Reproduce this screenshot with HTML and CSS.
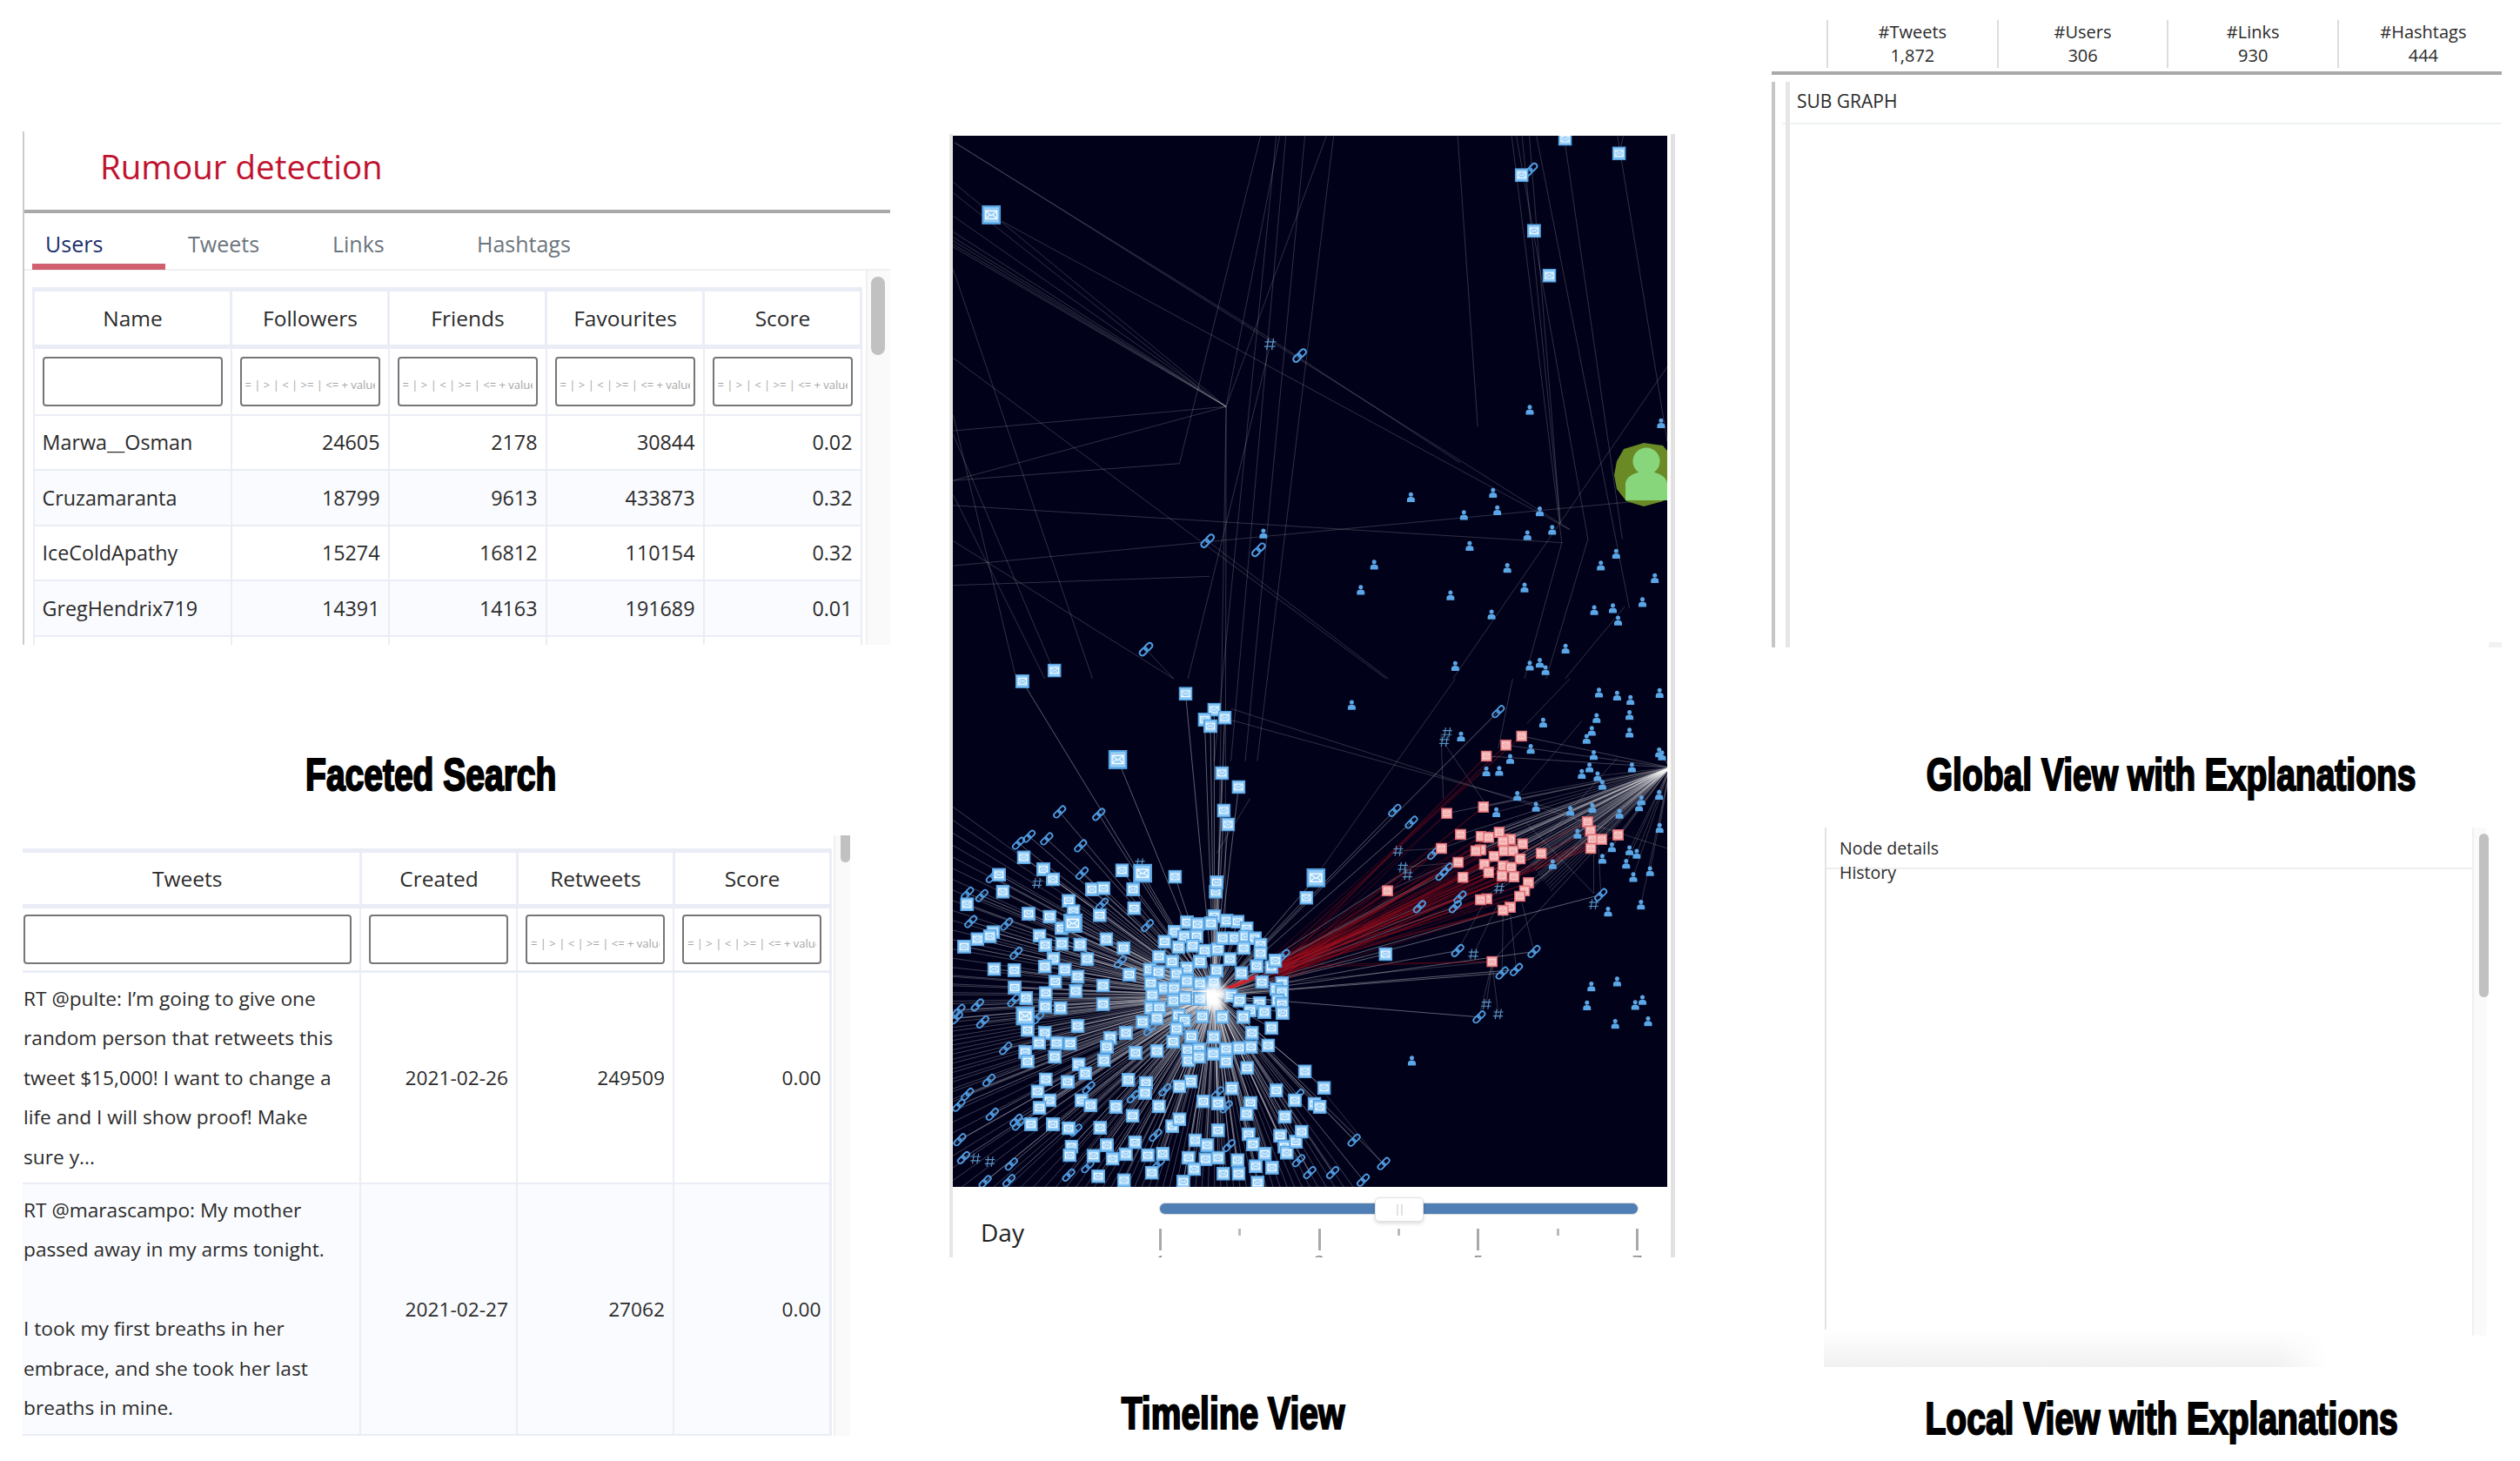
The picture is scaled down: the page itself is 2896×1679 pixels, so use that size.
FILE: index.html
```html
<!DOCTYPE html>
<html lang="en">
<head>
    <meta charset="UTF-8">
    <title>Rumour detection</title>
    <link rel="stylesheet" href="styles.css">
</head>
<body>
<div class="page">

    <div class="col col-left">
        <div class="users-panel">
            <h1 class="title">Rumour detection</h1>
            <div class="tabs">
                <span class="tab tab-users active">Users</span>
                <span class="tab tab-tweets">Tweets</span>
                <span class="tab tab-links">Links</span>
                <span class="tab tab-hashtags">Hashtags</span>
            </div>
            <div class="table-scroll">
                <div class="table-wrap">
                    <table class="grid users-grid">
                        <colgroup><col class="u-name"><col class="u-num"><col class="u-num"><col class="u-num"><col class="u-num"></colgroup>
                        <tr class="head-row"><th>Name</th><th>Followers</th><th>Friends</th><th>Favourites</th><th>Score</th></tr>
                        <tr class="filter-row">
                            <td><input></td>
                            <td><input placeholder="= | > | < | >= | <= + value"></td>
                            <td><input placeholder="= | > | < | >= | <= + value"></td>
                            <td><input placeholder="= | > | < | >= | <= + value"></td>
                            <td><input placeholder="= | > | < | >= | <= + value"></td>
                        </tr>
                        <tr class="row"><td>Marwa__Osman</td><td class="num">24605</td><td class="num">2178</td><td class="num">30844</td><td class="num">0.02</td></tr>
                        <tr class="row odd"><td>Cruzamaranta</td><td class="num">18799</td><td class="num">9613</td><td class="num">433873</td><td class="num">0.32</td></tr>
                        <tr class="row"><td>IceColdApathy</td><td class="num">15274</td><td class="num">16812</td><td class="num">110154</td><td class="num">0.32</td></tr>
                        <tr class="row odd"><td>GregHendrix719</td><td class="num">14391</td><td class="num">14163</td><td class="num">191689</td><td class="num">0.01</td></tr>
                        <tr class="row"><td></td><td></td><td></td><td></td><td></td></tr>
                    </table>
                </div>
                <div class="track track-users"><div class="thumb thumb-users"></div></div>
            </div>
        </div>

        <div class="caption caption-faceted"><span>Faceted Search</span></div>

        <div class="tweets-panel">
            <div class="tweets-wrap">
                <table class="grid tweets-grid">
                    <colgroup><col class="t-text"><col class="t-num"><col class="t-num"><col class="t-num"></colgroup>
                    <tr class="head-row"><th>Tweets</th><th>Created</th><th>Retweets</th><th>Score</th></tr>
                    <tr class="filter-row">
                        <td><input></td>
                        <td><input></td>
                        <td><input placeholder="= | > | < | >= | <= + value"></td>
                        <td><input placeholder="= | > | < | >= | <= + value"></td>
                    </tr>
                    <tr class="tweet-row">
                        <td>RT @pulte: I’m going to give one random person that retweets this tweet $15,000! I want to change a life and I will show proof! Make sure y...</td>
                        <td class="num">2021-02-26</td><td class="num">249509</td><td class="num">0.00</td>
                    </tr>
                    <tr class="tweet-row odd">
                        <td>RT @marascampo: My mother passed away in my arms tonight.<br><br>I took my first breaths in her embrace, and she took her last breaths in mine.</td>
                        <td class="num">2021-02-27</td><td class="num">27062</td><td class="num">0.00</td>
                    </tr>
                </table>
            </div>
            <div class="track track-tweets"><div class="thumb thumb-tweets"></div></div>
        </div>
    </div>

    <div class="col col-mid">
        <div class="graph-panel">
            <svg id="graph" class="graph" width="821" height="1208" viewBox="0 0 821 1208">
                <defs>
                    <radialGradient id="glow">
                        <stop offset="0" stop-color="#fff"></stop>
                        <stop offset="0.45" stop-color="#fff" stop-opacity="0.75"></stop>
                        <stop offset="1" stop-color="#fff" stop-opacity="0"></stop>
                    </radialGradient>
                    <symbol id="tweet" viewBox="0 0 24 24">
                        <rect width="24" height="24" fill="#55a2e2"></rect>
                        <rect x="2.5" y="2.5" width="19" height="19" fill="#93cdf7"></rect>
                        <rect x="5" y="7" width="14" height="10" fill="none" stroke="#fff" stroke-width="1.4"></rect>
                        <path d="M5 7l7 6 7-6M5 17l5-5M19 17l-5-5" fill="none" stroke="#fff" stroke-width="1.2"></path>
                    </symbol>
                    <symbol id="tweet-red" viewBox="0 0 24 24">
                        <rect width="24" height="24" fill="#d9656f"></rect>
                        <rect x="2.5" y="2.5" width="19" height="19" fill="#f2a9a9"></rect>
                        <rect x="5" y="7" width="14" height="10" fill="none" stroke="#fbe3e3" stroke-width="1.2"></rect>
                        <path d="M5 7l7 6 7-6" fill="none" stroke="#fbe3e3" stroke-width="1"></path>
                    </symbol>
                    <symbol id="user" viewBox="0 0 20 24">
                        <circle cx="10" cy="6.5" r="5" fill="#5ba6e6"></circle>
                        <path d="M1 24v-6c0-4 4-6 9-6s9 2 9 6v6z" fill="#5ba6e6"></path>
                    </symbol>
                    <symbol id="link" viewBox="0 0 24 24">
                        <g transform="rotate(-45 12 12)" fill="none" stroke="#4f9be0" stroke-width="2.6">
                            <rect x="0.5" y="8" width="13" height="8" rx="4"></rect>
                            <rect x="10.5" y="8" width="13" height="8" rx="4"></rect>
                        </g>
                    </symbol>
                    <symbol id="hash" viewBox="0 0 24 24">
                        <path d="M9 2L6 22M18 2l-3 20M3 8h19M2 16h19" fill="none" stroke="#5a93c4" stroke-width="2"></path>
                    </symbol>
                </defs>
                <g id="edges"></g>
                <g id="nodes"></g>
                <g class="focus-node">
                    <path d="M794 353l22 3 10 12v44l-10 8-22 6-20-6-11-14-3-16 3-16 8-14z" fill="#6a8a26"></path>
                    <circle cx="797" cy="374" r="15.5" fill="#88d67c"></circle>
                    <path d="M773 419v-18c0-9 10-15 24-15s24 6 24 15v18z" fill="#88d67c"></path>
                </g>
            </svg>
            <div class="day-bar">
                <span class="day-label">Day</span>
                <div class="slider">
                    <div class="slider-track">
                        <div class="slider-handle"><i></i><i></i></div>
                    </div>
                    <div class="ticks">
                        <div class="tick big"><b></b><span>1</span></div>
                        <div class="tick"><b></b></div>
                        <div class="tick big"><b></b><span>3</span></div>
                        <div class="tick"><b></b></div>
                        <div class="tick big"><b></b><span>5</span></div>
                        <div class="tick"><b></b></div>
                        <div class="tick big"><b></b><span>7</span></div>
                    </div>
                </div>
            </div>
        </div>
        <div class="caption caption-timeline"><span>Timeline View</span></div>
    </div>

    <div class="col col-right">
        <div class="stats">
            <div class="stat">#Tweets<br>1,872</div>
            <div class="stat">#Users<br>306</div>
            <div class="stat">#Links<br>930</div>
            <div class="stat">#Hashtags<br>444</div>
        </div>
        <div class="sub-graph">
            <div class="sub-graph-title">SUB GRAPH</div>
            <div class="corner-mark"></div>
        </div>
        <div class="caption caption-global"><span>Global View with Explanations</span></div>
        <div class="local-panel">
            <div class="local-main">
                <div class="local-head">Node details</div>
                <div class="local-sub">History</div>
            </div>
            <div class="track track-local"><div class="thumb thumb-local"></div></div>
        </div>
        <div class="local-fade"></div>
        <div class="caption caption-local"><span>Local View with Explanations</span></div>
    </div>

</div>
<script src="graph.js"></script>
</body>
</html>
```

FILE: styles.css
```css
* {
    box-sizing: border-box;
}
body {
    margin: 0;
    background: #fff;
    font-family: "Open Sans", sans-serif;
    color: #2b2b2b;
}
.page {
    display: grid;
    grid-template-columns: 1060px 976px 860px;
    width: 2896px;
    height: 1679px;
    overflow: hidden;
}
.col {
    min-width: 0;
}

/* captions */
.caption {
    height: 50px;
    line-height: 50px;
    text-align: center;
    white-space: nowrap;
}
.caption span {
    display: inline-block;
    font-family: "Liberation Sans", sans-serif;
    font-weight: 700;
    font-size: 52px;
    color: #000;
    -webkit-text-stroke: 2.2px #000;
    transform: scaleX(0.75);
}
.caption-faceted {
    width: 938px;
    margin-top: 124px;
}
.caption-timeline {
    width: 652px;
    margin-top: 154px;
}
.caption-global {
    width: 918px;
    margin-top: 121px;
}
.caption-local {
    width: 896px;
    margin-top: 34px;
}

/* left column */
.col-left {
    padding: 151px 0 0 26px;
}
.users-panel {
    width: 997px;
    height: 590px;
    overflow: hidden;
    border-left: 2px solid #ccc;
}
.title {
    margin: 0;
    height: 94px;
    padding: 13px 0 0 87px;
    font-size: 38.5px;
    line-height: 54px;
    font-weight: 400;
    color: #c0132f;
    border-bottom: 4px solid #a9a9a9;
}
.tabs {
    display: flex;
    height: 66px;
    border-bottom: 2px solid #eef0f4;
    font-size: 25px;
    color: #6c757d;
}
.tab {
    height: 65px;
    padding-top: 7px;
    line-height: 56px;
}
.tab-users {
    width: 153px;
    margin-left: 9px;
    padding-left: 15px;
    color: #1d2f6b;
    border-bottom: 7px solid #d0606e;
}
.tab-tweets {
    width: 166px;
    margin-left: 26px;
}
.tab-links {
    width: 166px;
}
.table-scroll {
    display: flex;
    height: 430px;
}
.table-wrap {
    width: 967px;
    padding: 19px 0 0 9px;
}
.track {
    border-left: 2px solid #eef0f4;
    background: #fafafa;
}
.track-users {
    width: 28px;
    padding: 7px 0 0 4px;
}
.thumb {
    background: #c1c1c1;
    border-radius: 8px;
}
.thumb-users {
    width: 16px;
    height: 90px;
}

.grid {
    border-collapse: collapse;
    table-layout: fixed;
    font-size: 23.3px;
    color: #2b2b2b;
}
.grid th {
    font-weight: 400;
    font-size: 24.5px;
    text-align: center;
    background: #fff;
    padding: 0 9px 0 10px;
    border: 3px solid #eaedf5;
    border-top-width: 5px;
    border-bottom-width: 5px;
}
.grid td {
    padding: 0 9px;
    border: 2px solid #eaedf5;
    overflow: hidden;
}
.grid .num {
    text-align: right;
}
.grid input {
    display: block;
    width: 100%;
    height: 57px;
    padding: 8px 4px 0;
    border: 2px solid #767676;
    border-radius: 4px;
    background: #fff;
    font-family: "Open Sans", sans-serif;
    font-size: 13px;
}
.grid input::placeholder {
    color: #a5a5a5;
    opacity: 1;
}
.users-grid {
    width: 951px;
}
.u-name {
    width: 227px;
}
.u-num {
    width: 181px;
}
.users-grid .head-row {
    height: 66px;
}
.users-grid .filter-row {
    height: 78px;
}
.users-grid .row {
    height: 63.5px;
}
.odd td {
    background: #fafbfe;
}

/* tweets table */
.tweets-panel {
    display: flex;
    width: 951px;
    height: 690px;
    margin-top: 45px;
    overflow: hidden;
}
.tweets-wrap {
    width: 932px;
    padding-top: 15px;
}
.tweets-grid {
    width: 928px;
    font-size: 22.7px;
}
.t-text {
    width: 388px;
}
.t-num {
    width: 180px;
}
.tweets-grid .head-row {
    height: 64px;
}
.tweets-grid th {
    border-left: 0;
}
.tweets-grid th:last-child,
.tweets-grid td:last-child {
    border-right-width: 3px;
}
.tweets-grid td:first-child {
    padding-left: 1px;
    padding-right: 9px;
    border-left: 0;
}
.tweets-grid th:first-child {
    padding-left: 1px;
}
.tweets-grid .filter-row {
    height: 75px;
}
.tweets-grid .filter-row td {
    border-bottom-width: 3px;
}
.tweet-row {
    line-height: 45.4px;
}
.tweet-row td {
    padding-top: 7px;
    padding-bottom: 7px;
}
.tweet-row.odd td {
    padding-bottom: 8px;
}
.track-tweets {
    width: 19px;
    padding-left: 6px;
}
.thumb-tweets {
    width: 11px;
    height: 31px;
    border-radius: 0 0 6px 6px;
}

/* graph */
.col-mid {
    padding: 154px 0 0 31px;
}
.graph-panel {
    width: 834px;
    height: 1291px;
    border-left: 4px solid #e6e6e6;
    border-right: 5px solid #e2e2e2;
    padding-right: 4px;
    overflow: hidden;
}
.graph {
    display: block;
    margin-top: 2px;
    background: #01021a;
}
.edge {
    stroke: #d8d4d4;
    stroke-width: 0.9;
    stroke-opacity: 0.25;
}
.edge-soft {
    stroke: #fff;
    stroke-width: 0.8;
    stroke-opacity: 0.3;
}
.edge-ray {
    stroke: #fff;
    stroke-width: 1;
    stroke-opacity: 0.36;
}
.edge-red {
    stroke: #a50f1e;
    stroke-width: 1;
    stroke-opacity: 0.38;
}
.edge-hot {
    stroke: #d3222c;
    stroke-width: 4;
}
.day-bar {
    display: flex;
    width: 821px;
    height: 81px;
    overflow: hidden;
}
.day-label {
    width: 237px;
    padding: 32px 0 0 32px;
    font-size: 28px;
    line-height: 40px;
    color: #222;
}
.slider {
    width: 551px;
    padding-top: 18px;
}
.slider-track {
    position: relative;
    height: 14px;
    background: #4f7fb5;
    border: 1px solid #dcdcdc;
    border-radius: 7px;
}
.slider-handle {
    position: absolute;
    left: 247px;
    top: -7px;
    display: flex;
    justify-content: center;
    gap: 3px;
    width: 56px;
    height: 28px;
    padding-top: 7px;
    background: #fff;
    border: 1px solid #e0e0e0;
    border-radius: 5px;
    box-shadow: 0 2px 4px rgba(0, 0, 0, 0.15);
}
.slider-handle i {
    width: 2px;
    height: 13px;
    background: #e2e2e2;
}
.ticks {
    display: flex;
    justify-content: space-between;
    margin-top: 16px;
}
.tick {
    display: flex;
    flex-direction: column;
    align-items: center;
    width: 3px;
    font-size: 20px;
    color: #888;
}
.tick b {
    width: 3px;
    height: 8px;
    background: #bbb;
}
.tick.big b {
    height: 25px;
    background: #a9a9a9;
}
.tick span {
    line-height: 26px;
}

/* right column */
.col-right {
    padding-top: 23px;
}
.stats {
    display: flex;
    width: 839px;
    height: 59px;
    padding-left: 63px;
}
.stat {
    flex: none;
    width: 195.7px;
    height: 55px;
    border-left: 2px solid #dcdcdc;
    text-align: center;
    font-size: 20px;
    line-height: 27px;
}
.sub-graph {
    position: relative;
    width: 839px;
    height: 662px;
    border-top: 4px solid #a9a9a9;
    padding-top: 8px;
}
.sub-graph-title {
    height: 49px;
    margin-left: 12px;
    padding-left: 17px;
    border-bottom: 2px solid #eef2f2;
    font-size: 21px;
    line-height: 44px;
}
.sub-graph::before {
    content: "";
    display: block;
    position: absolute;
    left: 0;
    top: 8px;
    bottom: 0;
    width: 12px;
    border-left: 4px solid #c6c6c6;
    border-right: 5px solid #e6e6e6;
}
.corner-mark {
    position: absolute;
    right: 0;
    bottom: 0;
    width: 15px;
    height: 6px;
    background: #f2f2f2;
}
.local-panel {
    display: flex;
    width: 761px;
    height: 584px;
    margin: 36px 0 0 61px;
    border-left: 2px solid #e4e4e4;
}
.local-main {
    width: 742px;
}
.local-head {
    height: 48px;
    padding: 10px 0 0 15px;
    font-size: 19.5px;
    line-height: 27px;
    border-bottom: 2px solid #eee;
}
.local-sub {
    margin-top: -10px;
    padding-left: 15px;
    font-size: 19.5px;
    line-height: 27px;
}
.track-local {
    width: 17px;
    padding: 7px 0 0 6px;
}
.thumb-local {
    width: 11px;
    height: 188px;
}
.local-fade {
    width: 578px;
    height: 43px;
    margin: -7px 0 0 60px;
    background: linear-gradient(to right, rgba(255, 255, 255, 0) 90%, #fff 100%), linear-gradient(to bottom, #fff, #f1f1f1);
}
```

FILE: graph.js
```js
// coordinates were read off two crops of the canvas, so they stay in crop units here
const upper = ([x, y]) => [x / 1.823 - 15, y / 2.45 - 16];
const lower = ([x, y]) => [x / 1.823 - 15, y / 1.744 + 624];

const hub = lower([575, 635]);
const fanRight = lower([1530, 178]);
const redRoot = lower([690, 575]);

const tweets = [[173,5],[515,30],[575,62],[555,82],[567,95],[597,78],[591,189],[626,217],[595,264],[604,292],[176,358],[217,382],[124,393],[237,402],[132,427],[57,452],[382,384],[493,397],[319,422],[343,420],[405,422],[270,445],[407,460],[186,471],[230,477],[280,466],[255,500],[335,474],[209,515],[112,508],[105,516],[79,522],[51,537],[221,534],[256,531],[294,533],[349,522],[385,540],[238,561],[309,562],[114,582],[156,584],[262,583],[220,577],[289,597],[242,607],[157,619],[342,615],[285,626],[397,593],[181,640],[222,630],[221,657],[253,660],[342,652],[289,696],[184,704],[220,710],[208,730],[245,730],[273,731],[357,720],[350,738],[390,710],[179,748],[184,767],[241,758],[291,773],[305,791],[344,765],[410,750],[455,746],[222,803],[205,827],[268,808],[230,845],[209,860],[297,845],[316,855],[395,804],[432,810],[430,830],[369,858],[404,876],[459,857],[526,807],[502,817],[191,893],[237,893],[270,901],[336,900],[350,935],[276,938],[272,955],[322,956],[362,962],[390,953],[409,929],[436,955],[467,952],[444,990],[332,997],[386,1005],[487,897],[502,883],[535,925],[560,935],[521,960],[557,963],[583,960],[533,983],[594,992],[510,1008],[626,992],[624,965],[662,977],[696,980],[666,1010],[583,905],[647,913],[656,933],[681,952],[713,916],[722,938],[727,950],[746,928],[758,908],[723,878],[705,825],[651,850],[643,872],[583,851],[552,847],[612,821],[644,780],[765,787],[805,820],[785,852],[796,858],[744,845],
    [518,488],[492,507],[540,492],[575,476],[601,485],[624,487],[643,500],[568,490],[471,527],[512,517],[538,516],[500,538],[530,535],[555,545],[582,542],[593,520],[618,520],[640,517],[660,520],[637,540],[672,533],[672,550],[459,557],[487,567],[518,580],[608,562],[545,567],[440,583],[458,588],[580,585],[632,590],[664,576],[695,578],[703,565],[496,592],[518,606],[574,608],[545,611],[442,610],[470,620],[491,620],[445,634],[490,645],[514,640],[545,642],[610,635],[628,645],[675,608],[717,610],[705,622],[717,628],[670,650],[708,645],[717,652],[718,670],[650,665],[680,668],[442,660],[460,660],[455,680],[425,688],[500,675],[513,685],[550,677],[592,678],[636,678],[496,702],[695,700],[654,710],[527,717],[574,718],[489,727],[520,745],[543,743],[600,742],[627,740],[652,738],[688,735],[573,752],[521,765],[543,758],[600,767],[578,427],[580,408],[768,439],[934,552]];
const bigTweets = [[373,162],[425,390],[279,490],[179,676],[788,399]];
const redTweets = [[1219,115],[1186,133],[1145,155],[1062,270],[1139,257],[1091,312],[1051,340],[1086,368],[1096,398],[938,425],[1134,316],[1150,318],[1172,308],[1195,322],[1180,326],[1221,331],[1133,343],[1123,345],[1161,356],[1182,345],[1201,345],[1216,361],[1260,350],[1141,372],[1180,375],[1197,378],[1150,388],[1178,395],[1203,397],[1233,409],[1225,425],[1215,436],[1146,441],[1133,443],[1195,458],[1180,464],[1157,567],[1357,287],[1363,305],[1368,322],[1387,322],[1421,313],[1364,340]];
const links = [[251,267],[333,272],[295,335],[224,321],[187,316],[165,330],[298,390],[88,435],[110,397],[58,430],[65,487],[140,492],[160,550],[378,568],[340,452],[435,495],[90,688],[79,654],[40,665],[35,680],[138,741],[103,805],[110,873],[58,833],[40,855],[160,885],[165,893],[42,924],[50,960],[150,973],[95,1008],[145,1006],[270,995],[310,978],[285,905],[312,820],[405,838],[472,824],[582,830],[600,858],[452,915],[606,936],[458,973],[752,966],[775,990],[823,990],[887,1005],[868,925],[930,972],[750,835],[720,555],[953,264],[988,288],[1170,66],[1035,350],[1052,392],[1062,382],[1090,438],[1080,457],[1005,457],[1085,545],[1245,547],[1178,590],[1208,583],[1130,678],[1385,433],[1187,462],[155,645],[205,680],[440,703]];
const hashes = [[1063,108],[1057,126],[960,345],[970,378],[980,393],[1172,420],[1118,552],[1145,652],[1170,672],[1370,452],[204,410],[419,370],[75,962],[105,968]];
const users = [[863,52],[1381,27],[1419,33],[1447,42],[1508,28],[1445,72],[1376,78],[1264,87],[1366,104],[1355,120],[1445,107],[1092,115],[1238,140],[1370,152],[1195,160],[1145,185],[1172,184],[1345,190],[1361,177],[1450,177],[1378,195],[1388,212],[1210,234],[1249,256],[1166,267],[1321,264],[1367,258],[1424,270],[1465,255],[1470,243],[1507,232],[1507,147],[1513,153],[1508,298],[1336,310],[1408,337],[1445,343],[1460,350],[1388,360],[1284,371],[1438,370],[1453,397],[1488,385],[1469,452],[1400,466],[1365,616],[1419,606],[1472,643],[1457,653],[1356,654],[1415,691],[1484,686],[989,765]];

const upperTweets = [[1219,150],[1310,48],[1423,89],[1245,307],[1277,433],[240,1545]];
const upperBig = [[108,262]];
const upperLinks = [[1238,135],[754,658],[561,1180],[668,1205],[432,1485]];
const upperUsers = [[1236,810],[1511,848],[987,1056],[1159,1044],[1098,1106],[1168,1093],[1257,1096],[1283,1148],[1231,1163],[678,1158],[1110,1193],[910,1246],[1189,1255],[1385,1248],[1417,1215],[1498,1284],[882,1317],[1070,1332],[1225,1310],[1156,1386],[1371,1374],[1410,1368],[1472,1351],[1421,1403],[1311,1482],[1080,1531],[1236,1530],[1257,1522],[1269,1543]];

const upperEdges = [
    [30,58,680,600],[680,600,1090,960],[34,60,1320,1148],[130,280,1320,1148],
    [28,170,600,802],[28,200,545,750],[28,265,600,802],[28,310,600,802],[28,325,600,802],[28,335,600,802],[28,345,600,802],[28,352,600,802],
    [600,802,28,870],[600,802,28,1010],[28,1010,502,962],[502,962,672,40],
    [600,802,810,40],[600,802,712,40],[600,802,598,2400],[600,802,580,2400],
    [690,640,520,1568],[705,40,575,1800],[725,40,610,1800],[765,40,640,1800],[825,40,665,1800],
    [1085,40,1127,858],
    [1198,40,1303,1185],[1208,40,1358,1175],[1220,40,1300,1130],[1235,40,1300,1130],[1250,40,1445,1370],[1310,60,1430,1175],[1420,40,1524,900],[1432,40,1424,90],
    [28,1080,1305,1185],[28,1250,1450,1070],[1524,690,1075,1568],[1303,1185,1225,1568],[1358,1175,1270,1568],[1435,1365,1310,1568],
    [28,665,935,1568],[28,415,320,1568],[28,825,160,1568],[28,880,240,1550],[28,1050,220,1568],[28,1180,490,1568],[28,1305,565,1280],
    [561,1180,940,1568],[432,1485,490,1568]
];
const lowerEdges = [
    [600,80,1320,270],[1080,0,800,380],[1200,0,1170,140],[1320,0,1230,90],[1050,110,1055,240],[1050,120,1150,260],
    [1345,85,1215,230],[1420,158,1260,330],[1370,320,1370,430],[1380,340,1385,430],[1230,290,1370,430],
    [1140,450,1085,545],[1170,450,1118,552],[1180,470,1178,590],[1195,470,1208,583],[1220,450,1245,547],
    [1157,570,1145,652],[1157,570,1170,672],[1157,570,1130,678],[960,345,1050,340],[970,378,1086,368],
    [715,610,1157,567],[650,240,580,350],[930,975,780,800],[870,925,700,760],[610,60,1524,340]
];

const edges = document.getElementById("edges");
const nodes = document.getElementById("nodes");
const svgNs = "http://www.w3.org/2000/svg";

function addLine(a, b, cls) {
    const line = document.createElementNS(svgNs, "line");
    line.setAttribute("x1", a[0].toFixed(1));
    line.setAttribute("y1", a[1].toFixed(1));
    line.setAttribute("x2", b[0].toFixed(1));
    line.setAttribute("y2", b[1].toFixed(1));
    line.setAttribute("class", cls);
    edges.appendChild(line);
}

function addNode(symbol, p, w, h) {
    const use = document.createElementNS(svgNs, "use");
    use.setAttribute("href", "#" + symbol);
    use.setAttribute("x", (p[0] - w / 2).toFixed(1));
    use.setAttribute("y", (p[1] - h / 2).toFixed(1));
    use.setAttribute("width", w);
    use.setAttribute("height", h);
    nodes.appendChild(use);
}

upperEdges.forEach(e => addLine(upper([e[0], e[1]]), upper([e[2], e[3]]), "edge"));
lowerEdges.forEach(e => addLine(lower([e[0], e[1]]), lower([e[2], e[3]]), "edge"));

// the star around the central hashtag
tweets.concat(bigTweets).concat(links).map(lower).forEach(p => addLine(hub, p, "edge-ray"));
for (let i = 0; i < 70; i++) {
    const angle = Math.PI * (0.3 + i * 0.0105);
    addLine(hub, [hub[0] + Math.cos(angle) * 700, hub[1] + Math.sin(angle) * 700], "edge-soft");
}
for (let i = 0; i < 30; i++) {
    const angle = Math.PI * (0.88 + i * 0.011);
    addLine(hub, [hub[0] + Math.cos(angle) * 420, hub[1] + Math.sin(angle) * 420], "edge-soft");
}

// fans towards the red group
redTweets.map(lower).forEach((p, i) => {
    addLine(fanRight, p, "edge-soft");
    addLine([redRoot[0] + (i % 4) * 5, redRoot[1] + (i % 7) * 3], p, "edge-red");
    addLine([redRoot[0] - 8 + (i % 5) * 6, redRoot[1] + (i % 3) * 5], p, "edge-red");
});
users.slice(20, 44).map(lower).forEach(p => addLine(fanRight, p, "edge"));
for (let i = 0; i < 26; i++) {
    addLine(fanRight, lower([1180 + i * 4, 300 + i * 5]), "edge-soft");
}
addLine(lower([600, 622]), lower([668, 595]), "edge-hot");

links.map(lower).forEach(p => addNode("link", p, 17, 17));
hashes.map(lower).forEach(p => addNode("hash", p, 14, 14));
users.map(lower).forEach(p => addNode("user", p, 10, 13));
tweets.map(lower).forEach(p => addNode("tweet", p, 16, 16));
bigTweets.map(lower).forEach(p => addNode("tweet", p, 22, 22));
redTweets.map(lower).forEach(p => addNode("tweet-red", p, 13, 13));

upperLinks.map(upper).forEach(p => addNode("link", p, 19, 19));
upperUsers.map(upper).forEach(p => addNode("user", p, 10, 13));
upperTweets.map(upper).forEach(p => addNode("tweet", p, 16, 16));
upperBig.map(upper).forEach(p => addNode("tweet", p, 22, 22));
addNode("hash", upper([692, 626]), 16, 16);

const glow = document.createElementNS(svgNs, "circle");
glow.setAttribute("cx", hub[0]);
glow.setAttribute("cy", hub[1]);
glow.setAttribute("r", 20);
glow.setAttribute("fill", "url(#glow)");
nodes.appendChild(glow);
```
